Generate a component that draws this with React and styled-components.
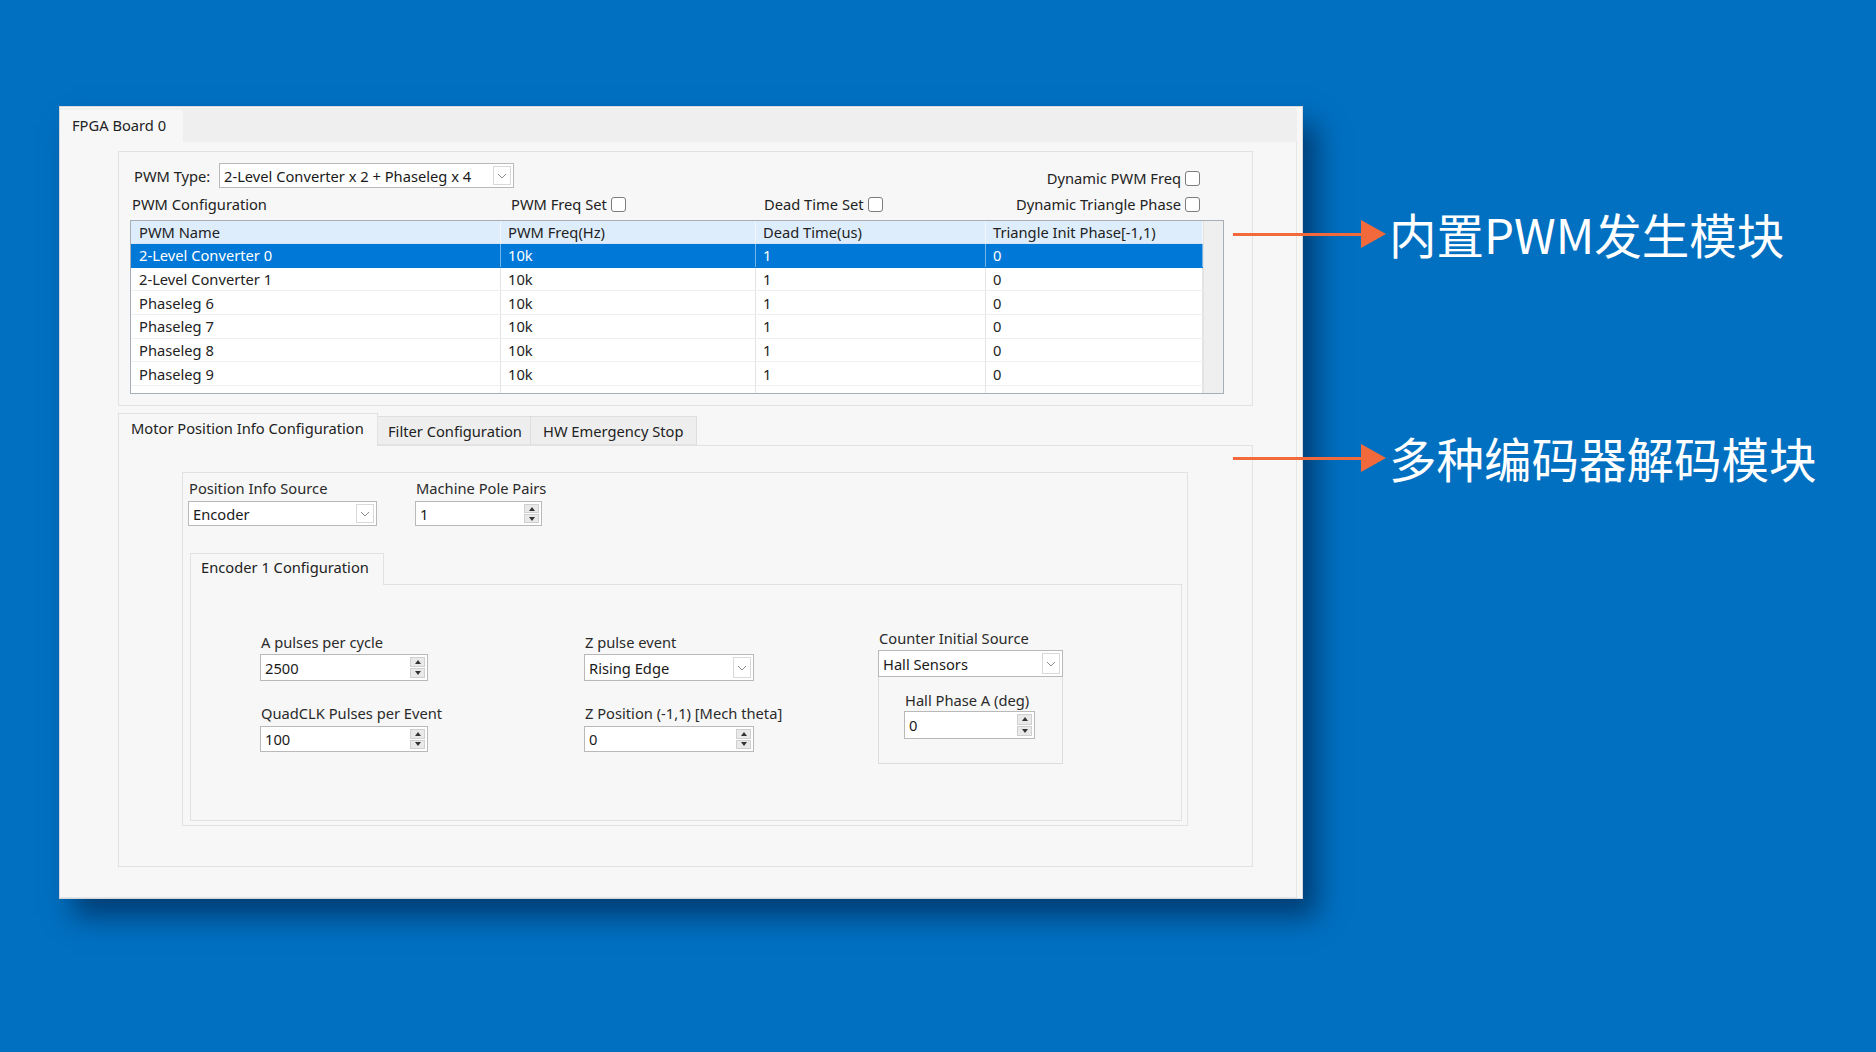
import React from 'react';
import styled, { createGlobalStyle } from 'styled-components';

const Global = createGlobalStyle`
  html, body { margin: 0; padding: 0; }
  body { background: #0170c1; font-family: "Noto Sans", "Liberation Sans", sans-serif; }
  * { box-sizing: border-box; }
`;

const Stage = styled.div`
  position: relative;
  width: 1876px;
  height: 1052px;
  overflow: hidden;
  background: #0170c1;
  padding: 106px 0 0 59px;
`;

const Window = styled.div`
  width: 1244px;
  height: 793px;
  background: #f7f7f7;
  border: 1px solid #d4d8dc;
  box-shadow: 14px 18px 26px rgba(0, 22, 55, 0.55);
  display: flex;
  flex-direction: column;
  font-size: 14.7px;
  color: #222;
`;

const TopStrip = styled.div`
  margin-top: 1px;
  margin-right: 5px;
  height: 34px;
  background: #efefef;
  display: flex;
  align-items: flex-end;
`;

const TopTab = styled.div`
  width: 123px;
  height: 32px;
  background: #f7f7f7;
  padding: 0 0 2px 12px;
  display: flex;
  align-items: center;
  color: #222;
`;

const Pane = styled.div`
  flex: 1;
  margin-right: 5px;
  border-right: 1px solid #e6e6e6;
  border-bottom: 1px solid #e6e6e6;
  padding: 9px 0 0 58px;
`;

const GroupBox = styled.div`
  width: ${p => p.$w}px;
  height: ${p => p.$h}px;
  border: 1px solid #e2e2e2;
`;

const PwmGroup = styled(GroupBox)`
  padding: 0 28px 0 11px;
`;

const HeadGrid = styled.div`
  display: grid;
  grid-template-columns: 371px 255px 230px 1fr;
  grid-template-rows: 25px 32px;
  padding-top: 11px;
`;

const TypeRow = styled.div`
  grid-column: 1 / span 3;
  display: flex;
  align-items: center;
`;

const TypeLabel = styled.span`
  width: 89px;
  padding-left: 4px;
  white-space: nowrap;
`;

const HeadCell = styled.div`
  display: flex;
  align-items: center;
  justify-content: ${p => (p.$right ? 'flex-end' : 'flex-start')};
  align-self: ${p => p.$align || 'center'};
  padding-left: ${p => p.$pl || 0}px;
  padding-right: ${p => p.$pr || 0}px;
  gap: 4px;
  white-space: nowrap;
`;

const CheckBox = styled.span`
  display: inline-block;
  width: 15px;
  height: 15px;
  border: 1px solid #7c7c7c;
  border-radius: 3px;
  background: #fff;
  flex: none;
`;

const Table = styled.div`
  height: 174px;
  border: 1px solid #a7aeb6;
  background: #fff;
  display: flex;
  overflow: hidden;
`;

const TableBody = styled.div`
  width: 1072px;
  display: flex;
  flex-direction: column;
`;

const ScrollTrack = styled.div`
  flex: 1;
  background: #efefef;
  border-left: 1px solid #e3e3e3;
`;

const Row = styled.div`
  display: grid;
  grid-template-columns: 370px 255px 230px 217px;
  height: ${p => (p.$head ? '23px' : '23.7px')};
  flex: none;
  background: ${p => (p.$head ? '#deedfc' : p.$sel ? '#0078d7' : '#fff')};
  color: ${p => (p.$sel ? '#fff' : '#222')};
  border-bottom: 1px solid ${p => (p.$head ? '#d4e4f6' : p.$sel ? '#0078d7' : '#efefef')};
`;

const Cell = styled.div`
  display: flex;
  align-items: center;
  padding-left: ${p => (p.$first ? 8 : 7)}px;
  border-right: 1px solid ${p => (p.$sel ? 'rgba(255,255,255,0.45)' : p.$head ? '#f2f7fd' : '#e4e4e4')};
  white-space: nowrap;
  overflow: hidden;
`;

const Section = styled.div`
  margin-top: 7px;
  width: 1135px;
`;

const TabBar = styled.div`
  display: flex;
  align-items: flex-end;
  height: ${p => p.$h || 32}px;
`;

const Tab = styled.div`
  width: ${p => p.$w}px;
  height: ${p => (p.$active ? p.$th + 1 : p.$th - 3)}px;
  margin-bottom: ${p => (p.$active ? -1 : 0)}px;
  position: relative;
  z-index: ${p => (p.$active ? 1 : 0)};
  background: ${p => (p.$active ? '#f7f7f7' : '#eeeeee')};
  border: 1px solid ${p => (p.$active ? '#e2e2e2' : '#dedede')};
  border-bottom: ${p => (p.$active ? 'none' : '1px solid #e2e2e2')};
  border-left: ${p => (p.$noLeft ? 'none' : undefined)};
  padding-left: ${p => p.$pl}px;
  padding-bottom: ${p => p.$pb || 0}px;
  display: flex;
  align-items: center;
  white-space: nowrap;
  color: #222;
`;

const TabPane = styled.div`
  height: ${p => p.$h}px;
  border: 1px solid #e2e2e2;
  padding: ${p => p.$pad};
`;

const PosGroup = styled(GroupBox)`
  padding: 5px 0 0 5px;
`;

const FieldRow = styled.div`
  display: flex;
  gap: 38px;
`;

const Field = styled.div`
  display: flex;
  flex-direction: column;
  margin-top: ${p => p.$mt || 0}px;
`;

const Label = styled.div`
  height: 20px;
  line-height: 20px;
  padding-left: 1px;
  margin-bottom: ${p => (p.$mb !== undefined ? p.$mb : 3)}px;
  white-space: nowrap;
  color: #2a2a2a;
`;

const InputBox = styled.div`
  position: relative;
  width: ${p => p.$w}px;
  height: ${p => p.$h}px;
  background: #fff;
  border: 1px solid #b9b9b9;
  display: flex;
  align-items: center;
  padding-left: 4px;
  color: #1a1a1a;
  flex: none;
`;

const DropBtn = styled.span`
  position: absolute;
  right: 2px;
  top: 2px;
  bottom: 2px;
  width: 18px;
  border: 1px solid #d9d9d9;
  background: #fff;
  display: flex;
  align-items: center;
  justify-content: center;
`;

const SpinBox = styled.span`
  position: absolute;
  right: 2px;
  top: 2px;
  bottom: 2px;
  width: 15px;
  display: flex;
  flex-direction: column;
  gap: 1px;
`;

const SpinHalf = styled.span`
  flex: 1;
  background: #e9e9e9;
  border: 1px solid #cfcfcf;
  display: flex;
  align-items: center;
  justify-content: center;
`;

const Tri = styled.span`
  width: 0;
  height: 0;
  border-left: 3px solid transparent;
  border-right: 3px solid transparent;
  ${p => (p.$up ? 'border-bottom: 4px solid #333;' : 'border-top: 4px solid #333;')}
`;

const EncTabs = styled.div`
  margin: 27px 0 0 2px;
  width: 992px;
`;

const EncGrid = styled.div`
  display: grid;
  grid-template-columns: 324px 294px 185px;
`;

const Column = styled.div`
  display: flex;
  flex-direction: column;
  margin-top: ${p => p.$mt || 0}px;
`;

const HallBox = styled.div`
  width: 185px;
  height: 87px;
  border: 1px solid #dcdcdc;
  border-top: none;
  padding: 13px 0 0 25px;
`;

const Callout = styled.div`
  position: absolute;
  left: 1233px;
  top: ${p => p.$top}px;
  display: flex;
  align-items: center;
  height: 48px;
`;

const Line = styled.span`
  width: 128px;
  height: 3px;
  background: #f26a3b;
`;

const Head = styled.span`
  width: 0;
  height: 0;
  border-left: 25px solid #f26a3b;
  border-top: 14px solid transparent;
  border-bottom: 14px solid transparent;
`;

const CalloutText = styled.span`
  margin-left: 3px;
  font-family: "Noto Sans CJK SC", "Noto Sans", sans-serif;
  font-size: 47.5px;
  line-height: 48px;
  color: #fff;
  white-space: nowrap;
`;

const Chevron = () => (
  <svg width="10" height="6" viewBox="0 0 10 6">
    <path d="M1 1 L5 5 L9 1" fill="none" stroke="#8c8c8c" strokeWidth="1" />
  </svg>
);

const Combo = ({ w, h, children }) => (
  <InputBox $w={w} $h={h}>
    {children}
    <DropBtn><Chevron /></DropBtn>
  </InputBox>
);

const Spin = ({ w, h, children }) => (
  <InputBox $w={w} $h={h}>
    {children}
    <SpinBox>
      <SpinHalf><Tri $up /></SpinHalf>
      <SpinHalf><Tri /></SpinHalf>
    </SpinBox>
  </InputBox>
);

const rows = [
  ['2-Level Converter 0', '10k', '1', '0'],
  ['2-Level Converter 1', '10k', '1', '0'],
  ['Phaseleg 6', '10k', '1', '0'],
  ['Phaseleg 7', '10k', '1', '0'],
  ['Phaseleg 8', '10k', '1', '0'],
  ['Phaseleg 9', '10k', '1', '0'],
  ['', '', '', ''],
];

export default function App() {
  return (
    <Stage>
      <Global />
      <Window>
        <TopStrip>
          <TopTab>FPGA Board 0</TopTab>
        </TopStrip>
        <Pane>
          <PwmGroup $w={1135} $h={255}>
            <HeadGrid>
              <TypeRow>
                <TypeLabel>PWM Type:</TypeLabel>
                <Combo w={295} h={25}>2-Level Converter x 2 + Phaseleg x 4</Combo>
              </TypeRow>
              <HeadCell $right $align="end" $pr={24}>
                Dynamic PWM Freq<CheckBox />
              </HeadCell>
              <HeadCell $pl={2}>PWM Configuration</HeadCell>
              <HeadCell $pl={10}>PWM Freq Set<CheckBox /></HeadCell>
              <HeadCell $pl={8}>Dead Time Set<CheckBox /></HeadCell>
              <HeadCell $right $pr={24}>Dynamic Triangle Phase<CheckBox /></HeadCell>
            </HeadGrid>
            <Table>
              <TableBody>
                <Row $head>
                  <Cell $head $first>PWM Name</Cell>
                  <Cell $head>PWM Freq(Hz)</Cell>
                  <Cell $head>Dead Time(us)</Cell>
                  <Cell $head>Triangle Init Phase[-1,1)</Cell>
                </Row>
                {rows.map((r, i) => (
                  <Row key={i} $sel={i === 0}>
                    {r.map((c, j) => (
                      <Cell key={j} $first={j === 0} $sel={i === 0}>{c}</Cell>
                    ))}
                  </Row>
                ))}
              </TableBody>
              <ScrollTrack />
            </Table>
          </PwmGroup>

          <Section>
            <TabBar>
              <Tab $active $th={32} $pb={5} $w={260} $pl={12}>Motor Position Info Configuration</Tab>
              <Tab $th={32} $w={153} $pl={10} $noLeft>Filter Configuration</Tab>
              <Tab $th={32} $w={166} $pl={12} $noLeft>HW Emergency Stop</Tab>
            </TabBar>
            <TabPane $h={422} $pad="26px 0 0 63px">
              <PosGroup $w={1006} $h={354}>
                <FieldRow>
                  <Field>
                    <Label>Position Info Source</Label>
                    <Combo w={189} h={25}>Encoder</Combo>
                  </Field>
                  <Field>
                    <Label>Machine Pole Pairs</Label>
                    <Spin w={127} h={25}>1</Spin>
                  </Field>
                </FieldRow>
                <EncTabs>
                  <TabBar $h={31}>
                    <Tab $active $th={31} $pb={5} $w={194} $pl={10}>Encoder 1 Configuration</Tab>
                  </TabBar>
                  <TabPane $h={237} $pad="47px 0 0 69px">
                    <EncGrid>
                      <Column>
                        <Label $mb={2}>A pulses per cycle</Label>
                        <Spin w={168} h={27}>2500</Spin>
                        <Field $mt={22}>
                          <Label>QuadCLK Pulses per Event</Label>
                          <Spin w={168} h={26}>100</Spin>
                        </Field>
                      </Column>
                      <Column>
                        <Label $mb={2}>Z pulse event</Label>
                        <Combo w={170} h={27}>Rising Edge</Combo>
                        <Field $mt={22}>
                          <Label>Z Position (-1,1) [Mech theta]</Label>
                          <Spin w={170} h={26}>0</Spin>
                        </Field>
                      </Column>
                      <Column $mt={-4}>
                        <Label $mb={2}>Counter Initial Source</Label>
                        <Combo w={185} h={27}>Hall Sensors</Combo>
                        <HallBox>
                          <Label $mb={1}>Hall Phase A (deg)</Label>
                          <Spin w={131} h={28}>0</Spin>
                        </HallBox>
                      </Column>
                    </EncGrid>
                  </TabPane>
                </EncTabs>
              </PosGroup>
            </TabPane>
          </Section>
        </Pane>
      </Window>

      <Callout $top={210}>
        <Line /><Head />
        <CalloutText>内置PWM发生模块</CalloutText>
      </Callout>
      <Callout $top={434}>
        <Line /><Head />
        <CalloutText>多种编码器解码模块</CalloutText>
      </Callout>
    </Stage>
  );
}
